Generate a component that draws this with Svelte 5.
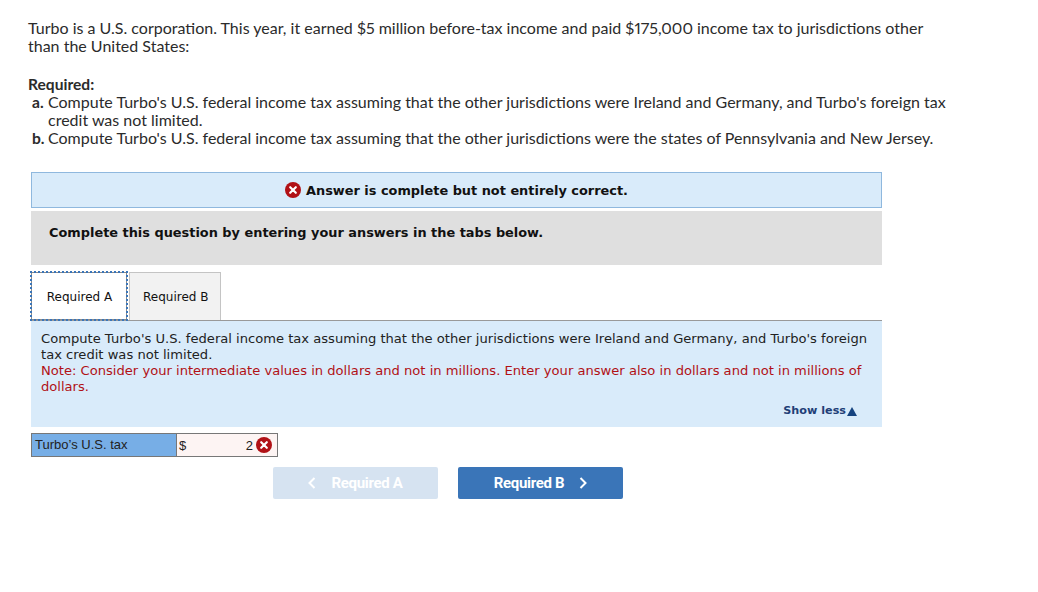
<script>
  const parts = [
    { letter: 'a.', lines: "Compute Turbo's U.S. federal income tax assuming that the other jurisdictions were Ireland and Germany, and Turbo's foreign tax credit was not limited." },
    { letter: 'b.', lines: "Compute Turbo's U.S. federal income tax assuming that the other jurisdictions were the states of Pennsylvania and New Jersey." }
  ];
</script>

{#snippet xicon(size)}
  <svg class="x" width={size} height={size} viewBox="0 0 16 16" aria-hidden="true">
    <circle cx="8" cy="8" r="8" fill="#b11116" />
    <path d="M5.2 5.2 10.8 10.8M10.8 5.2 5.2 10.8" stroke="#fff" stroke-width="2.2" stroke-linecap="round" fill="none" />
  </svg>
{/snippet}

<main class="page">
  <section class="question">
    <p class="intro">Turbo is a U.S. corporation. This year, it earned $5 million before-tax income and paid $175,000 income tax to jurisdictions other than the United States:</p>
    <h2 class="req">Required:</h2>
    <ol class="parts">
      {#each parts as p}
        <li><b>{p.letter}</b><span>{p.lines}</span></li>
      {/each}
    </ol>
  </section>

  <section class="work">
    <div class="banner">{@render xicon(16)}<strong>Answer is complete but not entirely correct.</strong></div>
    <div class="instruct">Complete this question by entering your answers in the tabs below.</div>

    <div class="tabs">
      <button class="tab active">Required A</button>
      <button class="tab">Required B</button>
    </div>

    <div class="panel">
      <p>Compute Turbo's U.S. federal income tax assuming that the other jurisdictions were Ireland and Germany, and Turbo's foreign tax credit was not limited.</p>
      <p class="note">Note: Consider your intermediate values in dollars and not in millions. Enter your answer also in dollars and not in millions of dollars.</p>
      <div class="less">Show less<span class="tri"></span></div>
    </div>

    <div class="answer">
      <div class="label">Turbo’s U.S. tax</div>
      <div class="cell"><span>$</span><span class="val">2</span>{@render xicon(16)}</div>
    </div>

    <div class="nav">
      <button class="btn off">
        <svg width="8" height="12" viewBox="0 0 8 12"><path d="M6.5 1 1.5 6l5 5" fill="none" stroke="currentColor" stroke-width="2" /></svg>
        <span>Required A</span>
      </button>
      <button class="btn on">
        <span>Required B</span>
        <svg width="8" height="12" viewBox="0 0 8 12"><path d="M1.5 1l5 5-5 5" fill="none" stroke="currentColor" stroke-width="2" /></svg>
      </button>
    </div>
  </section>
</main>

<style>
  :global(body) { margin: 0; background: #fff; }
  .page { padding: 19px 0 0 28px; width: 1010px; box-sizing: border-box; color: #222; font-family: Lato, "Open Sans", sans-serif; }
  .question { width: 930px; font-size: 16px; line-height: 18px; color: #2b2b2b; font-variant-numeric: proportional-nums; }
  p { margin: 0; }
  .req { margin: 20px 0 0; font-size: 15.6px; line-height: 18px; font-weight: 700; }
  .parts { list-style: none; margin: 0; padding: 0 0 0 4px; }
  .parts li { display: flex; width: 920px; }
  .parts b { flex: 0 0 16px; font-size: 15.6px; }
  .work { margin: 25px 0 0 3px; width: 851px; }
  .banner { height: 36px; box-sizing: border-box; border: 1px solid #8fb8de; background: #d9ebfa; display: flex; align-items: center; justify-content: center; gap: 5px; font: 700 12.9px "DejaVu Sans", Verdana, sans-serif; color: #111; }
  .x { flex: none; display: block; }
  .instruct { margin-top: 3px; height: 54px; box-sizing: border-box; padding: 14px 18px 0; background: #dfdfdf; font: 700 12.9px/16px "DejaVu Sans", Verdana, sans-serif; color: #111; }
  .tabs { display: flex; margin-top: 7px; height: 48px; }
  .tab { appearance: none; height: 48px; box-sizing: border-box; background: #f2f2f2; border: 1px solid #c4c4c4; border-bottom: 0; padding: 0 12px 0 13px; margin-left: 2px; font: 12px "DejaVu Sans", Verdana, sans-serif; color: #111; }
  .tab.active { margin-left: 0; width: 96px; padding: 2px 0 0 1px; background: #fff; border: 1px solid #8a8a8a; outline: 2px dotted #3a75b8; outline-offset: -1px; }
  .panel { background: #d9ebfa; border-top: 1px solid #999; height: 107px; box-sizing: border-box; padding: 10px 10px 0; font: 13.1px/16px "DejaVu Sans", Verdana, sans-serif; color: #222; }
  .note { color: #b11116; }
  .less { margin: 8px 25px 0 0; display: flex; justify-content: flex-end; align-items: center; padding-right: -10px; font: 700 11.2px/16px "DejaVu Sans", Verdana, sans-serif; color: #1f3f77; }
  .less { margin-right: 15px; }
  .tri { width: 0; height: 0; margin-left: 1px; border-left: 5px solid transparent; border-right: 5px solid transparent; border-bottom: 9px solid #15437f; }
  .answer { margin-top: 6px; display: flex; width: 247px; height: 24px; box-sizing: border-box; border: 1px solid #777; font: 13px "Liberation Sans", Arial, sans-serif; color: #222; }
  .label { width: 145px; background: #77aee6; border-right: 1px solid #777; padding-left: 3px; line-height: 22px; box-sizing: border-box; }
  .cell { flex: 1; display: flex; align-items: center; background: #fdf4f3; padding: 0 5px 0 2px; gap: 3px; }
  .val { margin-left: auto; }
  .nav { display: flex; gap: 20px; margin: 10px 0 0 242px; }
  .btn { appearance: none; width: 165px; height: 32px; border: 0; border-radius: 2px; display: flex; align-items: center; justify-content: center; gap: 15px; font: 700 15px Roboto, sans-serif; letter-spacing: -0.3px; color: #fff; }
  .btn.on { background: #3a75b8; }
  .btn.off { background: #d6e3f1; color: #fff; }
</style>
